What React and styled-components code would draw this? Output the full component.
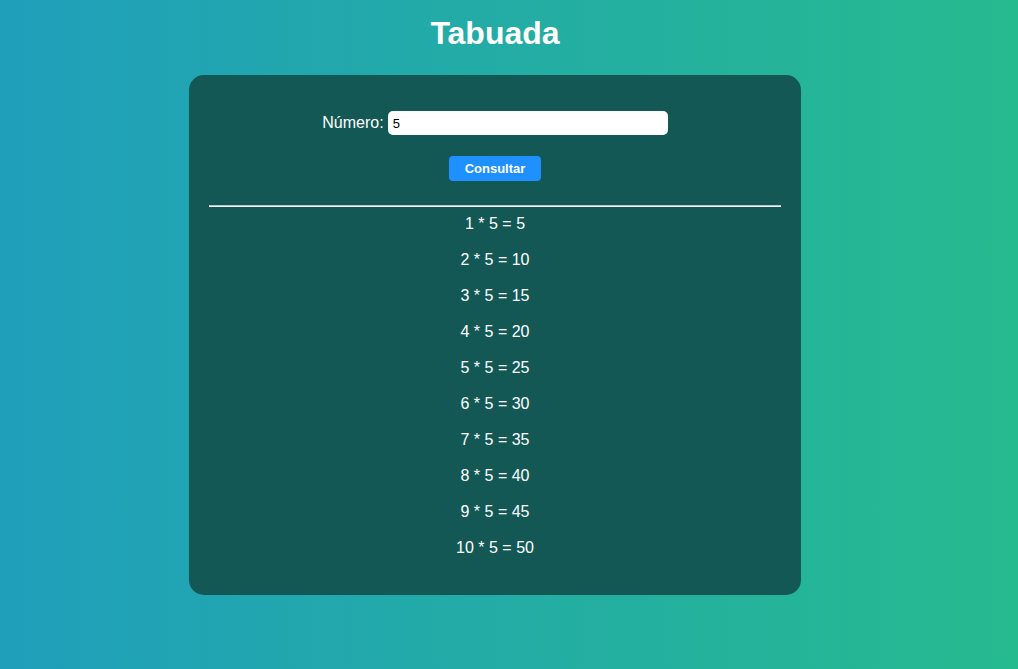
import React, { useState } from 'react'
import styled, { createGlobalStyle } from 'styled-components'

const GlobalStyle = createGlobalStyle`
  html, body {
    margin: 0;
    padding: 0;
  }
  body {
    min-height: 669px;
    font-family: "Liberation Sans", Arial, sans-serif;
    background: linear-gradient(to right, #209fbb, #26ba8f);
    color: #fff;
  }
`

const Page = styled.div`
  display: flex;
  flex-direction: column;
  align-items: center;
  padding: 15px 28px 0 0;
`

const Title = styled.h1`
  margin: 0 0 23px;
  font-size: 32px;
  line-height: 37px;
  font-weight: 700;
`

const Card = styled.div`
  width: 612px;
  box-sizing: border-box;
  background: #135854;
  border-radius: 15px;
  padding: 36px 20px 29px;
  display: flex;
  flex-direction: column;
  align-items: center;
`

const Field = styled.label`
  display: flex;
  align-items: center;
  gap: 4px;
  font-size: 16px;
`

const Input = styled.input`
  width: 280px;
  height: 24px;
  box-sizing: border-box;
  border: none;
  border-radius: 5px;
  padding: 0 5px;
  font-family: "Liberation Sans", Arial, sans-serif;
  font-size: 13px;
  color: #000;
  outline: none;
`

const Button = styled.button`
  margin-top: 21px;
  width: 92px;
  height: 25px;
  border: none;
  border-radius: 4px;
  background: #1e90ff;
  color: #fff;
  font-family: "Liberation Sans", Arial, sans-serif;
  font-size: 13px;
  font-weight: 700;
  cursor: pointer;
`

const Rule = styled.hr`
  align-self: stretch;
  margin: 24px 0 0;
  border: none;
  border-top: 1px solid #b9c6c6;
  border-bottom: 1px solid #f2f6f6;
`

const Results = styled.div`
  margin-top: -1px;
  display: flex;
  flex-direction: column;
  align-items: center;
`

const Row = styled.div`
  height: 36px;
  line-height: 36px;
  font-size: 16px;
`

const App = () => {
  const [numero, setNumero] = useState('5')
  const [tabela, setTabela] = useState(5)

  const rows = Array.from({ length: 10 }, (_, i) => i + 1)

  return (
    <>
      <GlobalStyle />
      <Page>
        <Title>Tabuada</Title>
        <Card>
          <Field>
            Número:
            <Input value={numero} onChange={e => setNumero(e.target.value)} />
          </Field>
          <Button onClick={() => setTabela(Number(numero) || 0)}>Consultar</Button>
          <Rule />
          <Results>
            {rows.map(n => (
              <Row key={n}>{n} * {tabela} = {n * tabela}</Row>
            ))}
          </Results>
        </Card>
      </Page>
    </>
  )
}

export default App
